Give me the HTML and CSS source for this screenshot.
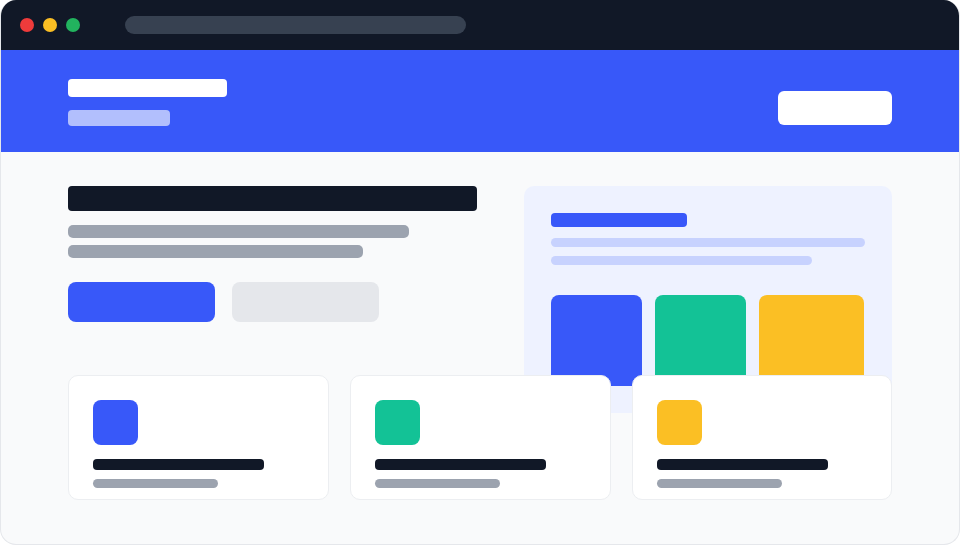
FILE: index.html
```html
<!DOCTYPE html>
<html lang="en">
<head>
<meta charset="utf-8">
<title>Wireframe</title>
<link rel="stylesheet" href="styles.css">
</head>
<body>
<div class="window">
  <div class="titlebar">
    <div class="dots">
      <span class="dot red"></span>
      <span class="dot yellow"></span>
      <span class="dot green"></span>
    </div>
    <div class="address"></div>
  </div>
  <header class="header">
    <div class="brand">
      <div class="brand-title"></div>
      <div class="brand-sub"></div>
    </div>
    <div class="header-btn"></div>
  </header>
  <main class="main">
    <section class="hero">
      <div class="hero-text">
        <div class="h1"></div>
        <div class="line line-a"></div>
        <div class="line line-b"></div>
        <div class="actions">
          <div class="btn btn-primary"></div>
          <div class="btn btn-secondary"></div>
        </div>
      </div>
      <div class="panel">
        <div class="panel-title"></div>
        <div class="panel-line pl-a"></div>
        <div class="panel-line pl-b"></div>
        <div class="blocks">
          <div class="block blue"></div>
          <div class="block green-b"></div>
          <div class="block yellow-b wide"></div>
        </div>
      </div>
    </section>
    <section class="cards">
      <div class="card">
        <div class="icon blue"></div>
        <div class="card-title"></div>
        <div class="card-sub"></div>
      </div>
      <div class="card">
        <div class="icon green-b"></div>
        <div class="card-title"></div>
        <div class="card-sub"></div>
      </div>
      <div class="card">
        <div class="icon yellow-b"></div>
        <div class="card-title"></div>
        <div class="card-sub"></div>
      </div>
    </section>
  </main>
</div>
</body>
</html>
```
FILE: styles.css
```css
* { box-sizing: border-box; }
html, body { margin: 0; padding: 0; background: #ffffff; font-family: "Inter", "Liberation Sans", sans-serif; }

.window {
  width: 960px;
  height: 545px;
  border: 1px solid #e5e7eb;
  border-top: 0;
  border-radius: 16px;
  overflow: hidden;
  background: #f9fafb;
  display: flex;
  flex-direction: column;
}

.titlebar {
  height: 50px;
  background: #111827;
  display: flex;
  align-items: center;
  padding-left: 19px;
  flex-shrink: 0;
}
.dots { display: flex; gap: 9px; }
.dot { width: 14px; height: 14px; border-radius: 50%; display: block; }
.dot.red { background: #ef3b3b; }
.dot.yellow { background: #fbbf24; }
.dot.green { background: #22b35e; }
.address {
  margin-left: 45px;
  width: 341px;
  height: 18px;
  border-radius: 9px;
  background: #374151;
}

.header {
  height: 102px;
  background: #3858f9;
  display: flex;
  align-items: center;
  justify-content: space-between;
  padding: 0 67px;
  flex-shrink: 0;
}
.brand { display: flex; flex-direction: column; gap: 13px; margin-top: 2px; }
.brand-title { width: 159px; height: 18px; background: #ffffff; border-radius: 4px; }
.brand-sub { width: 102px; height: 16px; background: #b2bffd; border-radius: 4px; }
.header-btn { width: 114px; height: 34px; background: #ffffff; border-radius: 6px; margin-top: 14px; }

.main { padding: 34px 67px 0; flex: 1; }

.hero {
  display: flex;
  justify-content: space-between;
  height: 227px;
}
.hero-text { width: 409px; display: flex; flex-direction: column; }
.h1 { width: 409px; height: 25px; background: #111827; border-radius: 4px; }
.line { height: 13px; background: #9ca3af; border-radius: 5px; }
.line-a { width: 341px; margin-top: 14px; }
.line-b { width: 295px; margin-top: 7px; }
.actions { display: flex; gap: 17px; margin-top: 24px; }
.btn { width: 147px; height: 40px; border-radius: 8px; }
.btn-primary { background: #3858f9; }
.btn-secondary { background: #e5e7eb; }

.panel {
  width: 368px;
  height: 227px;
  background: #eef2ff;
  border-radius: 10px;
  padding: 27px;
  display: flex;
  flex-direction: column;
}
.panel-title { width: 136px; height: 14px; background: #3858f9; border-radius: 4px; }
.panel-line { height: 9px; background: #c7d2fe; border-radius: 5px; }
.pl-a { width: 314px; margin-top: 11px; }
.pl-b { width: 261px; margin-top: 9px; }
.blocks { display: flex; gap: 13px; margin-top: 30px; }
.block { width: 91px; height: 91px; border-radius: 8px; }
.block.wide { width: 105px; }

.blue { background: #3858f9; }
.green-b { background: #13c296; }
.yellow-b { background: #fbbf24; }

.cards {
  position: relative;
  margin-top: -38px;
  display: flex;
  gap: 21px;
}
.card {
  width: 261px;
  height: 125px;
  background: #ffffff;
  border: 1px solid #eceef1;
  border-radius: 10px;
  padding: 24px 24px 0;
  display: flex;
  flex-direction: column;
}
.card:last-child { width: 260px; }
.icon { width: 45px; height: 45px; border-radius: 8px; }
.card-title { width: 171px; height: 11px; background: #111827; border-radius: 4px; margin-top: 14px; }
.card-sub { width: 125px; height: 9px; background: #9ca3af; border-radius: 5px; margin-top: 9px; }
```
